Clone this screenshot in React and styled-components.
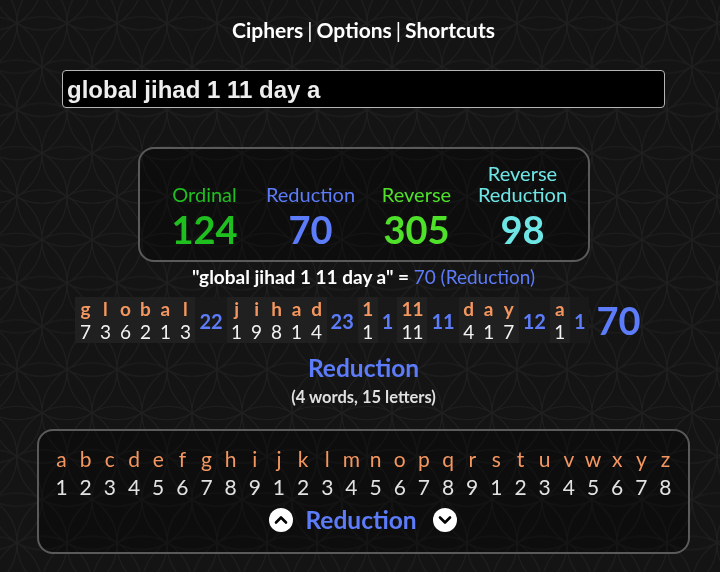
import React from 'react';
import styled, { createGlobalStyle } from 'styled-components';

const ORANGE = '#f4965f';
const BLUE = '#5c7cfa';

const GlobalStyle = createGlobalStyle`
  html, body { margin: 0; padding: 0; background: #141414; }
  body { font-family: Lato, "Noto Sans", sans-serif; color: #fff; }
`;

const Backdrop = styled.svg`
  position: fixed;
  inset: 0;
  width: 100%;
  height: 100%;
  z-index: 0;
  pointer-events: none;
`;

const Page = styled.div`
  position: relative;
  z-index: 1;
  display: flex;
  flex-direction: column;
  align-items: center;
  padding: 18px 0 0 7px;
  min-height: 572px;
  box-sizing: border-box;
`;

const Nav = styled.nav`
  font-size: 21px;
  font-weight: 700;
  line-height: 24px;
  color: #fff;
  display: flex;
  gap: 4px;
`;

const NavSep = styled.span`
  font-weight: 400;
`;

const TextInput = styled.input`
  margin-top: 28px;
  width: 603px;
  height: 38px;
  box-sizing: border-box;
  background: #000;
  border: 1px solid #b4b4b4;
  border-radius: 4px;
  padding: 2px 4px 0;
  color: #eee;
  font-family: "Liberation Sans", Arial, sans-serif;
  font-weight: 700;
  font-size: 24px;
  outline: none;
`;

const CipherBox = styled.div`
  margin-top: 39px;
  display: grid;
  grid-template-columns: repeat(4, 106px);
  padding: 14px 12px 8.5px;
  border: 2px solid #5a5a5a;
  border-radius: 16px;
  background: rgba(0, 0, 0, 0.3);
`;

const CipherCol = styled.div`
  display: flex;
  flex-direction: column;
  justify-content: flex-end;
  align-items: center;
  text-align: center;
  color: ${(p) => p.$color};
`;

const CipherLabel = styled.div`
  font-size: 20px;
  line-height: 21px;
  margin-bottom: 1.5px;
  padding: 0 4px;
`;

const CipherValue = styled.div`
  font-size: 38px;
  font-weight: 700;
  line-height: 45px;
`;

const Summary = styled.div`
  margin-top: 4px;
  font-size: 19px;
  line-height: 22px;
  font-weight: 700;
  color: #fff;
`;

const SummaryResult = styled.span`
  color: ${BLUE};
  font-weight: 400;
`;

const BreakdownRow = styled.div`
  margin-top: 9px;
  display: flex;
  align-items: center;
  margin-right: 11px;
`;

const Table = styled.div`
  display: flex;
  align-items: stretch;
`;

const WordBlock = styled.div`
  display: flex;
  background: #202020;
`;

const LetterCell = styled.div`
  display: flex;
  flex-direction: column;
  align-items: center;
  padding: 0 4px;
  min-width: 12px;
`;

const Letter = styled.div`
  color: ${ORANGE};
  font-weight: 700;
  font-size: 19px;
  line-height: 23px;
`;

const LetterValue = styled.div`
  color: #f2f2f2;
  font-size: 19px;
  line-height: 23px;
`;

const SumCell = styled.div`
  display: flex;
  align-items: center;
  padding: 2px 4px 0;
  color: ${BLUE};
  font-weight: 700;
  font-size: 20px;
  background: #191919;
`;

const Total = styled.div`
  margin-left: 7px;
  color: ${BLUE};
  font-weight: 700;
  font-size: 38px;
  line-height: 40px;
`;

const Heading = styled.div`
  margin-top: 11px;
  color: ${BLUE};
  font-weight: 700;
  font-size: 24.5px;
  line-height: 28px;
`;

const SubHeading = styled.div`
  margin-top: 6px;
  color: #e0e0e0;
  font-weight: 700;
  font-size: 16.5px;
  line-height: 18px;
`;

const ChartBox = styled.div`
  margin-top: 23px;
  width: 653px;
  box-sizing: border-box;
  padding: 15px 0 18px;
  border: 2px solid #5a5a5a;
  border-radius: 16px;
  background: rgba(0, 0, 0, 0.3);
  display: flex;
  flex-direction: column;
  align-items: center;
`;

const ChartGrid = styled.div`
  display: grid;
  grid-template-columns: repeat(26, 24.16px);
  row-gap: 2px;
  justify-items: center;
  font-size: 21px;
  line-height: 26px;
`;

const ChartLetter = styled.div`
  color: ${ORANGE};
`;

const ChartNum = styled.div`
  color: #e2e2e2;
`;

const Controls = styled.div`
  margin-top: 6px;
  display: flex;
  align-items: center;
  margin-left: -1px;
`;

const CircleBtn = styled.button`
  width: 24px;
  height: 24px;
  border-radius: 50%;
  border: none;
  background: #fff;
  padding: 0;
  display: flex;
  align-items: center;
  justify-content: center;
  margin: ${(p) => (p.$side === 'left' ? '0 12px 0 0' : '0 0 0 16px')};
`;

const ControlLabel = styled.div`
  color: ${BLUE};
  font-weight: 700;
  font-size: 24.5px;
  line-height: 28px;
`;

const ciphers = [
  { label: 'Ordinal', value: 124, color: '#1fbf1f' },
  { label: 'Reduction', value: 70, color: '#5c7cfa' },
  { label: 'Reverse', value: 305, color: '#4fe02a' },
  { label: 'Reverse Reduction', value: 98, color: '#6fe6e6' },
];

const words = [
  { chars: [['g', 7], ['l', 3], ['o', 6], ['b', 2], ['a', 1], ['l', 3]], sum: 22 },
  { chars: [['j', 1], ['i', 9], ['h', 8], ['a', 1], ['d', 4]], sum: 23 },
  { chars: [['1', 1]], sum: 1 },
  { chars: [['11', 11]], sum: 11 },
  { chars: [['d', 4], ['a', 1], ['y', 7]], sum: 12 },
  { chars: [['a', 1]], sum: 1 },
];

const alphabet = 'abcdefghijklmnopqrstuvwxyz'.split('');

function Chevron({ dir }) {
  const d = dir === 'up' ? 'M7 14.5 L12 9.5 L17 14.5' : 'M7 9.5 L12 14.5 L17 9.5';
  return (
    <svg width="24" height="24" viewBox="0 0 24 24">
      <path d={d} fill="none" stroke="#000" strokeWidth="2.6" strokeLinecap="round" strokeLinejoin="round" />
    </svg>
  );
}

function FlowerPattern() {
  const R = 50;
  const h = (R * Math.sqrt(3)) / 2;
  const centers = [
    [0, 0], [R, 0], [0, 2 * h], [R, 2 * h], [R / 2, h],
    [-R / 2, h], [1.5 * R, h], [R / 2, -h], [R / 2, 3 * h],
  ];
  return (
    <Backdrop aria-hidden="true">
      <defs>
        <pattern id="flower" width={R} height={2 * h} patternUnits="userSpaceOnUse" x="-8" y="-20">
          {centers.map(([cx, cy], i) => (
            <circle key={i} cx={cx} cy={cy} r={R} fill="none" stroke="#1f1f1f" strokeWidth="1.2" />
          ))}
        </pattern>
      </defs>
      <rect width="100%" height="100%" fill="url(#flower)" />
    </Backdrop>
  );
}

export default function App() {
  return (
    <>
      <GlobalStyle />
      <FlowerPattern />
      <Page>
        <Nav>
          <span>Ciphers</span>
          <NavSep>|</NavSep>
          <span>Options</span>
          <NavSep>|</NavSep>
          <span>Shortcuts</span>
        </Nav>
        <TextInput defaultValue="global jihad 1 11 day a" />
        <CipherBox>
          {ciphers.map((c, i) => (
            <CipherCol key={i} $color={c.color}>
              <CipherLabel>{c.label}</CipherLabel>
              <CipherValue>{c.value}</CipherValue>
            </CipherCol>
          ))}
        </CipherBox>
        <Summary>
          "global jihad 1 11 day a" = <SummaryResult>70 (Reduction)</SummaryResult>
        </Summary>
        <BreakdownRow>
          <Table>
            {words.map((w, wi) => (
              <React.Fragment key={wi}>
                <WordBlock>
                  {w.chars.map(([ch, v], ci) => (
                    <LetterCell key={ci}>
                      <Letter>{ch}</Letter>
                      <LetterValue>{v}</LetterValue>
                    </LetterCell>
                  ))}
                </WordBlock>
                <SumCell>{w.sum}</SumCell>
              </React.Fragment>
            ))}
          </Table>
          <Total>70</Total>
        </BreakdownRow>
        <Heading>Reduction</Heading>
        <SubHeading>(4 words, 15 letters)</SubHeading>
        <ChartBox>
          <ChartGrid>
            {alphabet.map((l) => (
              <ChartLetter key={l}>{l}</ChartLetter>
            ))}
            {alphabet.map((l, i) => (
              <ChartNum key={'n' + l}>{(i % 9) + 1}</ChartNum>
            ))}
          </ChartGrid>
          <Controls>
            <CircleBtn $side="left" aria-label="previous cipher">
              <Chevron dir="up" />
            </CircleBtn>
            <ControlLabel>Reduction</ControlLabel>
            <CircleBtn $side="right" aria-label="next cipher">
              <Chevron dir="down" />
            </CircleBtn>
          </Controls>
        </ChartBox>
      </Page>
    </>
  );
}
